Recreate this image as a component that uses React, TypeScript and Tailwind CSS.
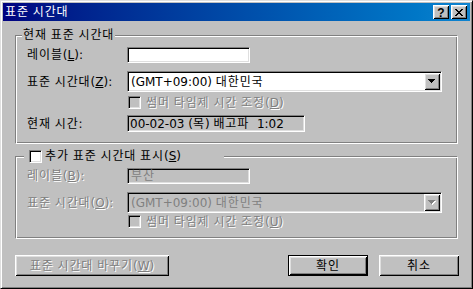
import React from "react";

const raised =
  "bg-[#c0c0c0] shadow-[inset_1px_1px_0_#fff,inset_-1px_-1px_0_#000,inset_2px_2px_0_#dfdfdf,inset_-2px_-2px_0_#808080]";
const sunken =
  "border border-t-[#808080] border-l-[#808080] border-r-white border-b-white shadow-[inset_1px_1px_0_#000,inset_-1px_-1px_0_#dfdfdf]";
const etched =
  "border border-t-[#808080] border-l-[#808080] border-r-white border-b-white shadow-[inset_1px_1px_0_#fff,inset_-1px_-1px_0_#808080]";
const dis = "text-[#808080] [text-shadow:1px_1px_0_#fff]";

// Widen Hangul runs slightly so they match the 12px cells of the original bitmap font
function K({ t }: { t: string }) {
  const parts = t.split(/([\uAC00-\uD7A3]+)/);
  return (
    <span className="whitespace-pre">
      {parts.map((p, i) =>
        /[\uAC00-\uD7A3]/.test(p) ? (
          <span key={i} className="tracking-[0.9px]">
            {p}
          </span>
        ) : (
          <React.Fragment key={i}>{p}</React.Fragment>
        )
      )}
    </span>
  );
}

function Arrow({ disabled }: { disabled?: boolean }) {
  const d = "M0 0h7v1h-1v1h-1v1h-1v1h-1v-1h-1v-1h-1v-1h-1z";
  return (
    <svg width="8" height="5" viewBox="0 0 8 5" shapeRendering="crispEdges">
      {disabled && <path d={d} fill="#fff" transform="translate(1,1)" />}
      <path d={d} fill={disabled ? "#808080" : "#000"} />
    </svg>
  );
}

function Check({ disabled }: { disabled?: boolean }) {
  return (
    <div
      className={`w-[13px] h-[13px] shrink-0 ${sunken} ${disabled ? "bg-[#c0c0c0]" : "bg-white"}`}
    />
  );
}

function Combo({ text, disabled }: { text: string; disabled?: boolean }) {
  return (
    <div
      className={`w-[315px] h-[21px] p-[1px] flex ${sunken} ${disabled ? "bg-[#c0c0c0]" : "bg-white"}`}
    >
      <div
        className={`flex-1 pl-[2px] flex items-center ${disabled ? "text-[#808080]" : "text-black"}`}
      >
        <K t={text} />
      </div>
      <div className={`w-[16px] h-[17px] flex items-center justify-center ${raised}`}>
        <Arrow disabled={disabled} />
      </div>
    </div>
  );
}

export default function App() {
  return (
    <div className="w-[473px] h-[289px] bg-[#c0c0c0] p-[2px] border border-t-[#dfdfdf] border-l-[#dfdfdf] border-r-black border-b-black shadow-[inset_1px_1px_0_#fff,inset_-1px_-1px_0_#808080] text-[12px] leading-[14px] text-black font-['DejaVu_Sans','Noto_Sans_CJK_KR',sans-serif] overflow-hidden">
      {/* Title bar */}
      <div className="h-[18px] flex items-center bg-linear-to-r from-[#000080] to-[#1084d0] pl-[2px] pr-[3px]">
        <span className="text-white text-[12px] font-normal leading-[14px]">
          <K t="표준 시간대" />
        </span>
        <div className="ml-auto flex gap-[1px]">
          <div className={`w-[16px] h-[14px] flex items-center justify-center ${raised}`}>
            <span className="font-['Liberation_Sans',sans-serif] font-bold text-[12px] leading-[12px] mt-[1px]">
              ?
            </span>
          </div>
          <div className={`w-[16px] h-[14px] ml-[1px] flex items-center justify-center ${raised}`}>
            <svg width="8" height="7" viewBox="0 0 8 7" shapeRendering="crispEdges">
              <path
                d="M0 0h2v1h-2z M6 0h2v1h-2z M1 1h2v1h-2z M5 1h2v1h-2z M2 2h4v1h-4z M3 3h2v1h-2z M2 4h4v1h-4z M1 5h2v1h-2z M5 5h2v1h-2z M0 6h2v1h-2z M6 6h2v1h-2z"
                fill="#000"
              />
            </svg>
          </div>
        </div>
      </div>

      {/* Body */}
      <div className="pl-[12px] flex flex-col">
        {/* Group 1 */}
        <div className={`mt-[14px] w-[443px] h-[109px] ${etched}`}>
          <div className="-mt-[8px] ml-[6px] px-[1px] w-fit h-[14px] bg-[#c0c0c0]">
            <K t="현재 표준 시간대" />
          </div>
          <div className="pl-[11px] flex flex-col">
            <div className="mt-[5px] h-[16px] flex items-center">
              <div className="w-[100px]">
                <K t="레이블(" />
                <u>L</u>):
              </div>
              <div className={`w-[123px] h-[16px] bg-white ${sunken}`} />
            </div>
            <div className="mt-[8px] h-[21px] flex items-center">
              <div className="w-[100px]">
                <K t="표준 시간대(" />
                <u>Z</u>):
              </div>
              <Combo text="(GMT+09:00) 대한민국" />
            </div>
            <div className="mt-[4px] h-[13px] flex items-center">
              <div className="ml-[101px]">
                <Check disabled />
              </div>
              <div className={`ml-[5px] ${dis}`}>
                <K t="썸머 타임제 시간 조정(" />
                <u>D</u>)
              </div>
            </div>
            <div className="mt-[6px] h-[17px] flex items-center">
              <div className="w-[100px]">
                <K t="현재 시간:" />
              </div>
              <div className={`w-[178px] h-[17px] pl-[2px] flex items-center bg-[#c0c0c0] ${sunken}`}>
                <K t="00-02-03 (목) 배고파  1:02" />
              </div>
            </div>
          </div>
        </div>

        {/* Group 2 */}
        <div className={`mt-[12px] w-[443px] h-[83px] ${etched}`}>
          <div className="-mt-[8px] ml-[8px] w-[200px] h-[14px] flex items-center bg-[#c0c0c0]">
            <div className="ml-[5px]">
              <Check />
            </div>
            <div className="ml-[3px]">
              <K t="추가 표준 시간대 표시(" />
              <u>S</u>)
            </div>
          </div>
          <div className="pl-[11px] flex flex-col">
            <div className="mt-[5px] h-[16px] flex items-center">
              <div className={`w-[100px] ${dis}`}>
                <K t="레이블(" />
                <u>B</u>):
              </div>
              <div className={`w-[123px] h-[16px] pl-[3px] flex items-center bg-[#c0c0c0] text-[#808080] ${sunken}`}>
                <K t="부산" />
              </div>
            </div>
            <div className="mt-[8px] h-[21px] flex items-center">
              <div className={`w-[100px] ${dis}`}>
                <K t="표준 시간대(" />
                <u>O</u>):
              </div>
              <Combo text="(GMT+09:00) 대한민국" disabled />
            </div>
            <div className="mt-[2px] h-[13px] flex items-center">
              <div className="ml-[101px]">
                <Check disabled />
              </div>
              <div className={`ml-[5px] ${dis}`}>
                <K t="썸머 타임제 시간 조정(" />
                <u>U</u>)
              </div>
            </div>
          </div>
        </div>

        {/* Buttons */}
        <div className="mt-[16px] flex">
          <div className={`w-[154px] h-[21px] flex items-center justify-center ${raised} ${dis}`}>
            <span>
              <K t="표준 시간대 바꾸기(" />
              <u>W</u>)
            </span>
          </div>
          <div className="ml-[119px] w-[80px] h-[21px] border border-black">
            <div className={`w-full h-full flex items-center justify-center ${raised}`}>
              <K t="확인" />
            </div>
          </div>
          <div className={`ml-[11px] w-[80px] h-[21px] flex items-center justify-center ${raised}`}>
            <K t="취소" />
          </div>
        </div>
      </div>
    </div>
  );
}
